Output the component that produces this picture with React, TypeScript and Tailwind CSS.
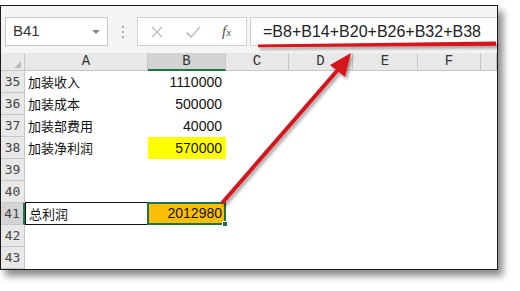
import React from "react";

type Row = {
  n: number;
  label?: string;
  value?: string;
  fill?: string;
  selected?: boolean;
};

const rows: Row[] = [
  { n: 35, label: "加装收入", value: "1110000" },
  { n: 36, label: "加装成本", value: "500000" },
  { n: 37, label: "加装部费用", value: "40000" },
  { n: 38, label: "加装净利润", value: "570000", fill: "bg-[#ffff00]" },
  { n: 39 },
  { n: 40 },
  { n: 41, label: "总利润", value: "2012980", selected: true },
  { n: 42 },
  { n: 43 },
];

const cols = ["A", "B", "C", "D", "E", "F", ""];

function Toolbar() {
  return (
    <div className="flex h-[47px] shrink-0 items-start bg-[#f5f5f5] pt-[11px]">
      <div className="ml-[4px] flex h-[29px] w-[103px] items-center justify-between border border-[#c8c8c8] bg-white pl-[7px] pr-[7px]">
        <span className="font-['Liberation_Sans',sans-serif] text-[15px] text-[#333]">B41</span>
        <span className="h-0 w-0 border-x-[4px] border-t-[4px] border-x-transparent border-t-[#888]" />
      </div>
      <div className="ml-[14px] mt-[9px] flex flex-col gap-[3px]">
        <span className="h-[2px] w-[2px] bg-[#aaa]" />
        <span className="h-[2px] w-[2px] bg-[#aaa]" />
        <span className="h-[2px] w-[2px] bg-[#aaa]" />
      </div>
      <div className="ml-[13px] flex h-[29px] w-[110px] items-center border border-[#d0d0d0] bg-white">
        <svg width="14" height="14" viewBox="0 0 14 14" className="ml-[12px]">
          <path d="M2 2 L12 12 M12 2 L2 12" stroke="#c4c4c4" strokeWidth="1.6" />
        </svg>
        <svg width="16" height="14" viewBox="0 0 16 14" className="ml-[21px]">
          <path d="M1.5 7.5 L6 12 L15 2" stroke="#c4c4c4" strokeWidth="1.8" fill="none" />
        </svg>
        <span className="ml-[21px] font-['Liberation_Serif',serif] text-[15px] italic text-[#555]">
          f<span className="text-[11px]">x</span>
        </span>
      </div>
      <div className="ml-[3px] flex h-[29px] flex-1 items-center border-y border-l border-[#d0d0d0] bg-white pl-[12px]">
        <span className="font-['Liberation_Sans',sans-serif] text-[16px] text-[#222]">=B8+B14+B20+B26+B32+B38</span>
      </div>
    </div>
  );
}

function Sheet() {
  return (
    <div className="grid grid-cols-[24px_123px_78px_63px_64px_65px_63px_1fr] grid-rows-[18px_repeat(9,22px)]">
      <div className="relative border-b border-r border-[#c6c6c6] bg-[#e8e8e8]">
        <span className="absolute bottom-[2px] right-[3px] h-0 w-0 border-b-[7px] border-l-[7px] border-b-[#bcbcbc] border-l-transparent" />
      </div>
      {cols.map((c, i) => (
        <div
          key={i}
          className={
            c === "B"
              ? "flex items-center justify-center border-b-2 border-r border-b-[#217346] border-r-[#c6c6c6] bg-[#d4d4d4] font-['Liberation_Mono',monospace] text-[14px] text-[#333]"
              : "flex items-center justify-center border-b border-r border-[#c6c6c6] bg-[#e8e8e8] font-['Liberation_Mono',monospace] text-[14px] text-[#333]"
          }
        >
          {c}
        </div>
      ))}
      {rows.map((r) => (
        <React.Fragment key={r.n}>
          <div
            className={
              r.selected
                ? "flex items-center justify-center border-b border-r-2 border-b-[#c6c6c6] border-r-[#217346] bg-[#d4d4d4] font-['DejaVu_Sans_Mono',monospace] text-[13px] text-[#444]"
                : "flex items-center justify-center border-b border-r border-[#c6c6c6] bg-[#e8e8e8] font-['DejaVu_Sans_Mono',monospace] text-[13px] text-[#444]"
            }
          >
            {r.n}
          </div>
          <div
            className={
              r.selected
                ? "-mt-px flex h-[23px] items-center border border-[#111] pl-[3px] font-['Noto_Sans_CJK_SC',sans-serif] text-[13px] text-[#111]"
                : "flex items-center pl-[3px] font-['Noto_Sans_CJK_SC',sans-serif] text-[13px] text-[#111]"
            }
          >
            {r.label}
          </div>
          {r.selected ? (
            <div className="relative -ml-px -mt-px flex h-[23px] items-center justify-end border-2 border-[#217346] bg-[#fcbf05] pr-[2px] font-['Liberation_Sans',sans-serif] text-[14px] text-[#111]">
              {r.value}
              <span className="absolute -bottom-[4px] -right-[4px] h-[6px] w-[6px] border border-white bg-[#217346]" />
            </div>
          ) : (
            <div
              className={`flex items-center justify-end pr-[4px] font-['Liberation_Sans',sans-serif] text-[14px] text-[#111] ${r.fill ?? ""}`}
            >
              {r.value}
            </div>
          )}
          <div />
          <div />
          <div />
          <div />
          <div />
        </React.Fragment>
      ))}
    </div>
  );
}

function Annotations() {
  return (
    <svg className="pointer-events-none absolute left-0 top-0" width="520" height="291" viewBox="0 0 520 291">
      <defs>
        <filter id="sh" x="-20%" y="-20%" width="140%" height="140%">
          <feDropShadow dx="2" dy="2.5" stdDeviation="1.6" floodColor="#000" floodOpacity="0.35" />
        </filter>
      </defs>
      <g filter="url(#sh)">
        <path d="M258 44.5 L496 41.5 L496 45.8 L258 47.2 Z" fill="#d5141b" />
        <path d="M223 202 L336 72" stroke="#d5141b" strokeWidth="4" strokeLinecap="round" />
        <path d="M351 53 L330 65 L345 77 Z" fill="#d5141b" />
      </g>
    </svg>
  );
}

export default function App() {
  return (
    <div className="relative h-[291px] w-[520px] overflow-hidden bg-white">
      <div className="mt-[5px] flex h-[265px] w-[498px] flex-col overflow-hidden border border-[#1a1a1a] bg-white shadow-[5px_6px_7px_rgba(0,0,0,0.45)]">
        <Toolbar />
        <Sheet />
      </div>
      <Annotations />
    </div>
  );
}
